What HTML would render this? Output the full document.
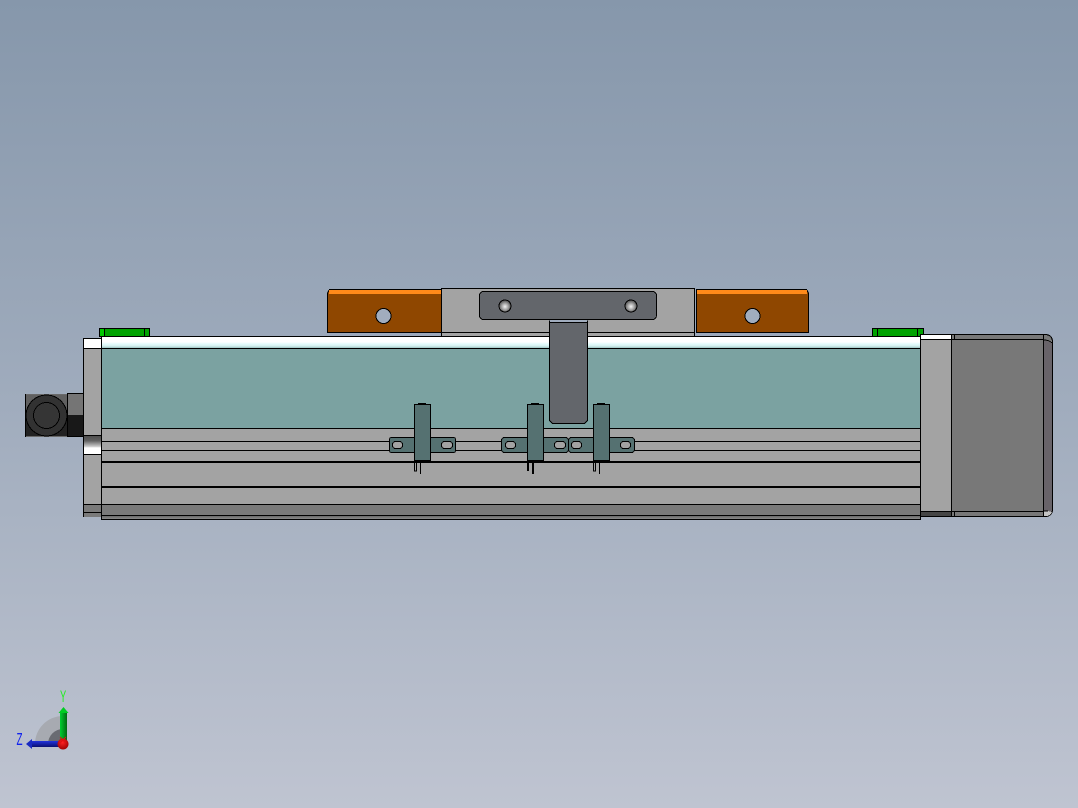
<!DOCTYPE html>
<html>
<head>
<meta charset="utf-8">
<style>
html,body{margin:0;padding:0;width:1078px;height:808px;overflow:hidden}
body{background:linear-gradient(180deg,#8697ab 0%,#a0acbd 50%,#bfc4d1 100%)}
svg{display:block;position:absolute;left:0;top:0}
text{font-family:"Liberation Sans",sans-serif}
</style>
</head>
<body>
<svg width="1078" height="808" viewBox="0 0 1078 808" shape-rendering="crispEdges">
<defs>
<linearGradient id="w" x1="0" y1="0" x2="0" y2="1"><stop offset="0" stop-color="#fff"/><stop offset=".45" stop-color="#fff"/><stop offset=".65" stop-color="#e2fbfb"/><stop offset=".82" stop-color="#d5f0ef"/><stop offset="1" stop-color="#9cc4c3"/></linearGradient>
<linearGradient id="g1" x1="0" y1="0" x2="0" y2="1"><stop offset="0" stop-color="#4a4a4a"/><stop offset=".3" stop-color="#606060"/><stop offset=".6" stop-color="#c8c8c8"/><stop offset=".68" stop-color="#fff"/><stop offset="1" stop-color="#fff"/></linearGradient>
<linearGradient id="g2" x1="0" y1="0" x2="0" y2="1"><stop offset="0" stop-color="#6a6a6a"/><stop offset="1" stop-color="#8a8a8a"/></linearGradient>
<radialGradient id="scr" cx=".5" cy=".55" r=".55"><stop offset="0" stop-color="#f4f4f4"/><stop offset=".55" stop-color="#9a9a9a"/><stop offset="1" stop-color="#444"/></radialGradient>
<radialGradient id="red" cx=".45" cy=".35" r=".7"><stop offset="0" stop-color="#f22"/><stop offset="1" stop-color="#900"/></radialGradient>
<linearGradient id="gar" x1="0" y1="0" x2="1" y2="0"><stop offset="0" stop-color="#00d030"/><stop offset="1" stop-color="#006a10"/></linearGradient>
<linearGradient id="bar" x1="0" y1="0" x2="0" y2="1"><stop offset="0" stop-color="#2233dd"/><stop offset="1" stop-color="#0a0f70"/></linearGradient>
</defs>

<!-- connector -->
<rect x="25.500" y="394.500" width="42" height="42" fill="#222" stroke="#6a6a6a"/>
<rect x="26" y="395" width="41" height="20" fill="#606060"/>
<path d="M25.500 394v43" stroke="#000" fill="none"/>
<circle cx="46.500" cy="415.500" r="20.500" fill="#323232" stroke="#000"/>
<circle cx="46.500" cy="415.500" r="13" fill="#353535" stroke="#000"/>
<rect x="67.500" y="393.500" width="16" height="43" fill="#181818" stroke="#000"/>
<rect x="68" y="394" width="15" height="21" fill="#757575"/>

<!-- green tabs -->
<rect x="99.500" y="328.500" width="50" height="8" fill="#00a200" stroke="#000"/>
<rect x="100" y="329" width="4" height="7" fill="#00c800"/>
<path d="M104.500 329v7M144.500 329v7" stroke="#000"/>
<rect x="872.500" y="328.500" width="51" height="8" fill="#00a200" stroke="#000"/>
<path d="M877.500 329v7M917.500 329v7" stroke="#000"/>

<!-- left end block -->
<rect x="83.500" y="338.500" width="18" height="178" fill="#a3a3a3" stroke="#000"/>
<rect x="84" y="339" width="17" height="9" fill="#fff"/>
<path d="M84 348.500h17" stroke="#000"/>
<rect x="84" y="435" width="17" height="19" fill="url(#g1)"/>
<path d="M84 435.500h17M84 454.500h17" stroke="#000"/>
<rect x="84" y="505" width="17" height="12" fill="#7a7a7a"/>
<path d="M84 504.500h17M84 512.500h17" stroke="#000"/>

<!-- carriage -->
<path d="M327.500 293l2-3.500h112v43h-114z" fill="#8f4700" stroke="#000"/>
<rect x="329" y="290" width="112" height="4" fill="#ff8a1a"/>
<circle cx="383.500" cy="316" r="7.500" fill="#a1adbe" stroke="#000"/>
<path d="M696.500 293v-3.500h110l2 3.500v39.500h-112z" fill="#8f4700" stroke="#000"/>
<rect x="697" y="290" width="110" height="4" fill="#ff8a1a"/>
<circle cx="752.500" cy="316" r="7.500" fill="#a1adbe" stroke="#000"/>
<rect x="441.500" y="288.500" width="253" height="48" fill="#a3a3a3" stroke="#000"/>
<path d="M442 332.500h252" stroke="#000"/>
<rect x="479.500" y="291.500" width="177" height="28" rx="4" ry="4" fill="#63666b" stroke="#000"/>
<circle cx="505" cy="306" r="6" fill="url(#scr)" stroke="#000"/>
<circle cx="631" cy="306" r="6" fill="url(#scr)" stroke="#000"/>

<!-- main body -->
<rect x="101.500" y="336.500" width="819" height="183" fill="#a3a3a3" stroke="#000"/>
<rect x="102" y="337" width="818" height="11" fill="url(#w)"/>
<path d="M102 348.500h818" stroke="#000"/>
<rect x="102" y="349" width="818" height="79" fill="#7ba2a1"/>
<path d="M102 428.500h818M102 441.500h818M102 450.500h818M102 504.500h818" stroke="#000"/>
<path d="M102 462h818M102 487h818" stroke="#000" stroke-width="2"/>
<rect x="102" y="505" width="818" height="10" fill="#7a7a7a"/>
<rect x="102" y="516" width="818" height="3" fill="url(#g2)"/>
<path d="M102 515.500h818" stroke="#000"/>

<!-- T stem -->
<rect x="549" y="320" width="39" height="2" fill="#a1adbe"/>
<path d="M549.500 322.500h38v98l-3 3h-32l-3-3z" fill="#63666b" stroke="#000"/>
<path d="M549.500 320.500v2M587.500 320.500v2" stroke="#000"/>

<!-- sensor brackets -->
<g fill="#557171" stroke="#000">
<rect x="389.500" y="437.500" width="66" height="15" rx="2"/>
<rect x="501.500" y="437.500" width="67" height="15" rx="3"/>
<rect x="568.500" y="437.500" width="66" height="15" rx="3"/>
</g>
<g fill="#a3a3a3" stroke="#000">
<rect x="392.500" y="441.500" width="10" height="7" rx="3"/>
<rect x="441.500" y="441.500" width="11" height="7" rx="3"/>
<rect x="505.500" y="441.500" width="10" height="7" rx="3"/>
<rect x="554.500" y="441.500" width="11" height="7" rx="3"/>
<rect x="571.500" y="441.500" width="10" height="7" rx="3"/>
<rect x="620.500" y="441.500" width="10" height="7" rx="3"/>
</g>
<!-- sensors -->
<g fill="#557171" stroke="#000">
<rect x="414.500" y="404.500" width="16" height="56"/>
<rect x="527.500" y="404.500" width="16" height="56"/>
<rect x="593.500" y="404.500" width="16" height="56"/>
</g>
<path d="M418 403.500h8M531 403.500h8M597 403.500h8" stroke="#000"/>
<path d="M414 461h17M527 461h17M593 461h17" stroke="#000" stroke-width="2"/>
<!-- pins -->
<g fill="none" stroke="#000">
<path d="M414.500 461v10h2v-10M420.500 461v13"/>
<path d="M593.500 461v10h2v-10M599.500 461v13"/>
</g>
<path d="M528 461v10M533 461v13" stroke="#000" stroke-width="2"/>

<!-- right end block -->
<rect x="920.500" y="334.500" width="31" height="182" fill="#a3a3a3" stroke="#000"/>
<rect x="921" y="335" width="30" height="4" fill="#fff"/>
<path d="M921 339.500h30" stroke="#000"/>
<rect x="921" y="512" width="30" height="4" fill="#454545"/>
<path d="M921 511.500h30" stroke="#000"/>

<!-- motor -->
<path d="M951.500 334.500H1046Q1052 335 1052.500 341V510Q1052 516 1046 516.500H951.500z" fill="#787878" stroke="#000"/>
<path d="M1044 340l8 3V510Q1051 515 1047 516H1044z" fill="#686369"/>
<path d="M1044 511h4l4 1q-1 3.500-5 4h-3z" fill="#c4c4c4"/>
<path d="M951 339.500h93M951 511.500h93M1043.500 335v181M954.500 335v4M954.500 512v4" stroke="#000" fill="none"/>
<path d="M1044 340q5 0 8 3M1044 511h4" stroke="#000" fill="none"/>

<!-- triad -->
<g shape-rendering="geometricPrecision">
<path d="M35 744a28 28 0 0 1 28-28v28z" fill="#a7aab1"/>
<path d="M48 744a15 15 0 0 1 15-15v15z" fill="#696b72"/>
<rect x="60" y="712" width="7" height="30" fill="url(#gar)"/>
<path d="M63.500 707l5 6h-10z" fill="#00cc22"/>
<rect x="32" y="741" width="28" height="6" fill="url(#bar)"/>
<path d="M26 744l6-5v10z" fill="#1a2ac0"/>
<circle cx="63" cy="744" r="5.500" fill="url(#red)"/>
<path d="M60 737l6 6M66 737l-6 6" stroke="#e01010"/>
<text transform="translate(60 702) scale(.55 1)" font-size="17" fill="#22ee22">Y</text>
<text transform="translate(16.500 745) scale(.55 1)" font-size="18" fill="#1122ee">Z</text>
</g>
</svg>
</body>
</html>
